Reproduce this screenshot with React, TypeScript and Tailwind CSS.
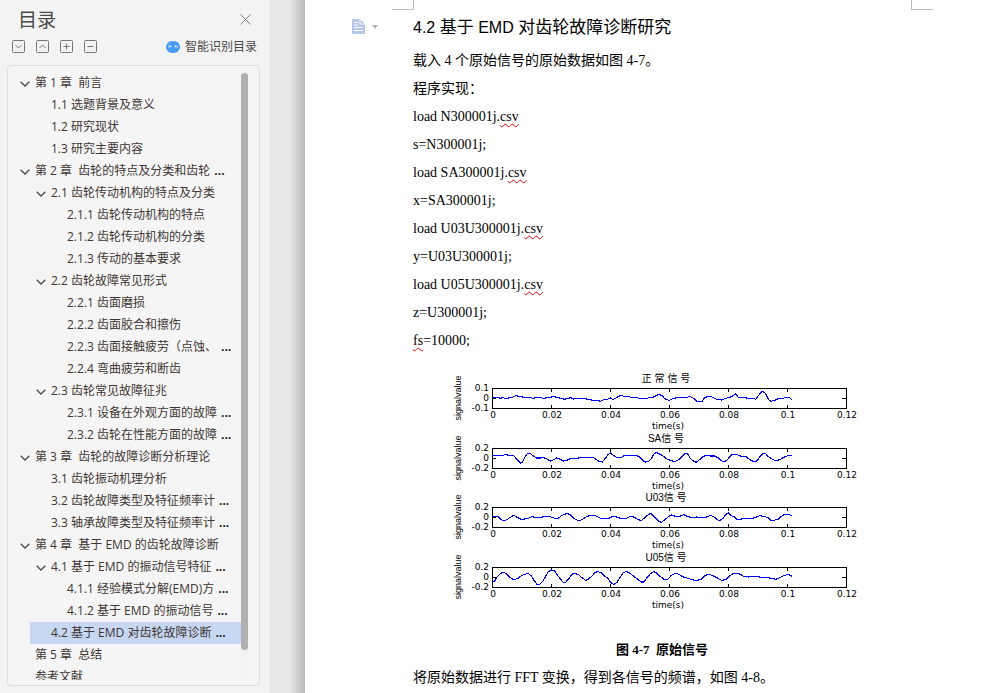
import type { ReactNode } from "react";

type TocItem = {
  text: string;
  level: 1 | 2 | 3;
  open?: boolean;
  cut?: boolean;
  current?: boolean;
};

const toc: TocItem[] = [
  { text: "第 1 章  前言", level: 1, open: true },
  { text: "1.1 选题背景及意义", level: 2 },
  { text: "1.2 研究现状", level: 2 },
  { text: "1.3 研究主要内容", level: 2 },
  { text: "第 2 章  齿轮的特点及分类和齿轮", level: 1, open: true, cut: true },
  { text: "2.1 齿轮传动机构的特点及分类", level: 2, open: true },
  { text: "2.1.1 齿轮传动机构的特点", level: 3 },
  { text: "2.1.2 齿轮传动机构的分类", level: 3 },
  { text: "2.1.3 传动的基本要求", level: 3 },
  { text: "2.2 齿轮故障常见形式", level: 2, open: true },
  { text: "2.2.1 齿面磨损", level: 3 },
  { text: "2.2.2 齿面胶合和擦伤", level: 3 },
  { text: "2.2.3 齿面接触疲劳（点蚀、", level: 3, cut: true },
  { text: "2.2.4 弯曲疲劳和断齿", level: 3 },
  { text: "2.3 齿轮常见故障征兆", level: 2, open: true },
  { text: "2.3.1 设备在外观方面的故障", level: 3, cut: true },
  { text: "2.3.2 齿轮在性能方面的故障", level: 3, cut: true },
  { text: "第 3 章  齿轮的故障诊断分析理论", level: 1, open: true },
  { text: "3.1 齿轮振动机理分析", level: 2 },
  { text: "3.2 齿轮故障类型及特征频率计", level: 2, cut: true },
  { text: "3.3 轴承故障类型及特征频率计", level: 2, cut: true },
  { text: "第 4 章  基于 EMD 的齿轮故障诊断", level: 1, open: true },
  { text: "4.1 基于 EMD 的振动信号特征", level: 2, open: true, cut: true },
  { text: "4.1.1 经验模式分解(EMD)方", level: 3, cut: true },
  { text: "4.1.2 基于 EMD 的振动信号", level: 3, cut: true },
  { text: "4.2 基于 EMD 对齿轮故障诊断", level: 2, cut: true, current: true },
  { text: "第 5 章  总结", level: 1 },
  { text: "参考文献", level: 1 },
];

const indent = { 1: "ml-[6px]", 2: "ml-[22px]", 3: "ml-[38px]" };

function TocRow({ item }: { item: TocItem }) {
  return (
    <li className={indent[item.level]}>
      <a
        href="#section"
        aria-current={item.current ? "location" : undefined}
        className={`flex h-[22px] items-center whitespace-pre ${item.current ? "bg-[#c7d7f1]" : ""}`}
      >
        <span className="flex w-[21px] shrink-0 justify-center pt-[2px]">
          {item.open && (
            <svg width="10" height="6" viewBox="0 0 10 6" fill="none" stroke="#4a4a4a" strokeWidth="1.3">
              <path d="M0.7 0.8 5 5l4.3-4.2" />
            </svg>
          )}
        </span>
        <span>{item.text}</span>
        {item.cut && <span className="ml-[4px] font-bold text-[#222]">...</span>}
      </a>
    </li>
  );
}

function BoxButton({ label, d }: { label: string; d: string }) {
  return (
    <button type="button" aria-label={label} className="h-[13px] w-[13px]">
      <svg width="13" height="13" viewBox="0 0 13 13" fill="none" stroke="#777" strokeWidth="1">
        <rect x="0.5" y="0.5" width="12" height="12" rx="1" />
        <path d={d} />
      </svg>
    </button>
  );
}

function Sidebar() {
  return (
    <aside className="flex w-[269px] shrink-0 flex-col bg-[#f3f3f3] pr-[9px] pb-[7px] pl-[7px] font-['Open_Sans','Noto_Sans_CJK_SC',sans-serif] text-[12px] text-[#403533]">
      <header className="flex h-[38px] items-center justify-between pr-[9px] pl-[11px]">
        <h2 className="pt-[2px] text-[19px] leading-9 text-[#4a4a4a]">目录</h2>
        <button type="button" aria-label="关闭">
          <svg width="11" height="11" viewBox="0 0 11 11" fill="none" stroke="#808080" strokeWidth="1">
            <path d="M0.5 0.5l10 10M10.5 0.5l-10 10" />
          </svg>
        </button>
      </header>
      <div className="flex h-[18px] items-center pr-[3px] pl-[5px]">
        <div className="flex gap-[11px] pb-[2px]">
          <BoxButton label="全部展开" d="M3.500 5l3 3 3-3" />
          <BoxButton label="全部收起" d="M3.500 8l3-3 3 3" />
          <BoxButton label="展开" d="M3.500 6.500h6M6.500 3.500v6" />
          <BoxButton label="收起" d="M3.500 6.500h6" />
        </div>
        <button type="button" className="ml-auto flex items-center gap-[5px] text-[#4a4a4a]">
          <svg width="14" height="12" viewBox="0 0 14 12">
            <path
              fill="#4b9bf5"
              d="M7 0c3.200 0 5.200 1 6 3 .8 1 1 1.700 1 3s-.2 2-1 3c-.8 2-2.800 3-6 3s-5.200-1-6-3C.2 8 0 7.300 0 6s.2-2 1-3c.8-2 2.800-3 6-3z"
            />
            <path d="M2.200 6.300 4.300 4.600 4.900 6.300M9.100 6.300l.6-1.700 2.100 1.700" fill="none" stroke="#fff" />
          </svg>
          智能识别目录
        </button>
      </div>
      <nav
        aria-label="目录"
        className="mt-[9px] flex min-h-0 flex-1 rounded-[4px] border border-[#dedede] bg-[#f5f5f5] pt-[6px] pr-[11px] pb-[5px]"
      >
        <ul className="min-w-0 flex-1 overflow-hidden">
          {toc.map((item) => (
            <TocRow key={item.text} item={item} />
          ))}
        </ul>
        <div className="w-[7px] bg-[#f2f2f2] pt-px">
          <div className="h-[95%] rounded-full bg-[#b0b0b1]" />
        </div>
      </nav>
    </aside>
  );
}

type Signal = { title: string; top: number; limit: string; points: string };

/* Trace points: x runs 157..1219 over the 0..0.12 s axis, y is measured from the zero line. */
const signals: Signal[] = [
  {
    title: "正 常 信 号",
    top: 16,
    limit: "0.1",
    points:
      "157,-1 165,-2 175,-3 182,0 190,-2 198,1 206,-1 215,-2 224,-6 230,-9 238,-5 248,-4 260,-3 272,-3 280,0 290,-2 302,-2 312,0 322,-2 332,-3 342,-6 350,-3 360,-1 375,3 385,0 393,-2 402,2 415,-1 425,1 440,2 450,4 462,6 475,7 483,9 492,4 505,2 512,-1 520,4 530,-2 540,-7 546,-9 555,-5 565,-6 575,-3 585,-3 595,-1 610,2 625,-1 640,-3 650,-8 658,-12 668,-7 675,1 688,6 700,1 712,-2 725,-2 738,-3 752,-5 762,0 770,8 778,11 787,9 795,-2 808,-7 820,-3 830,3 845,5 858,0 870,-3 880,-8 888,-13 895,-4 905,-2 920,-1 932,0 942,0 948,3 956,-8 964,-18 970,-21 978,-14 986,3 994,9 1005,6 1015,1 1030,0 1042,-4 1050,-2 1058,6",
  },
  {
    title: "SA信 号",
    top: 76,
    limit: "0.2",
    points:
      "157,-9 190,-9 198,-12 206,-9 222,-8 232,3 242,14 248,13 256,-4 264,-15 272,-15 280,-8 290,-1 302,-1 312,-2 322,2 332,8 345,3 350,-1 358,1 370,8 380,7 390,2 400,0 408,1 420,-2 460,-3 470,4 480,10 488,11 496,1 504,-10 512,-16 520,-10 528,-5 535,-1 545,-3 555,-9 590,-9 600,-4 610,7 618,11 626,10 636,0 642,-12 650,-18 658,-14 670,-7 680,1 692,6 705,10 718,3 728,-7 736,-15 744,-13 752,0 762,9 770,12 780,4 790,-5 802,-10 812,-7 825,-7 835,-2 845,7 853,11 862,5 872,-7 880,-13 892,-11 902,-7 920,-4 930,4 942,10 950,10 960,-4 968,-13 976,-16 984,-7 995,1 1008,7 1020,4 1032,-3 1042,-7 1050,-9 1058,-9",
  },
  {
    title: "U03信 号",
    top: 135,
    limit: "0.2",
    points:
      "157,-1 165,-3 175,-2 183,6 192,10 202,7 210,1 222,-6 232,0 245,6 265,4 275,-2 290,0 302,0 315,-2 332,-2 345,3 355,4 365,-5 375,-9 382,-12 392,-7 400,0 408,7 420,10 432,4 442,-3 452,-5 462,-6 472,-3 482,3 495,4 510,2 520,-3 530,-1 545,4 560,3 572,-3 582,-1 592,5 605,10 615,1 625,-7 633,-12 640,-6 648,3 655,10 665,15 675,8 685,-1 695,-7 710,-2 722,-4 732,-8 745,-2 758,1 770,-1 785,1 800,-1 813,-6 825,0 833,7 840,10 850,3 858,-9 866,-13 874,-5 884,-2 892,7 900,7 912,3 935,4 948,0 960,-5 975,-2 985,1 992,8 1002,9 1015,6 1025,-3 1035,-9 1050,-8 1058,-3",
  },
  {
    title: "U05信 号",
    top: 195,
    limit: "0.2",
    points:
      "157,13 165,11 172,-1 180,-9 190,-16 200,-11 210,0 222,7 235,3 245,-5 265,-12 275,-4 283,9 292,21 300,21 310,11 318,-3 326,-17 335,-22 345,-19 352,-9 362,5 370,14 378,15 388,3 396,-9 405,-12 418,-7 428,2 438,9 448,4 458,-5 466,-15 475,-17 485,-13 495,-4 505,3 512,14 522,22 532,15 542,-1 550,-13 560,-18 570,-13 580,-5 590,3 605,14 613,14 622,1 632,-11 642,-17 650,-14 662,-2 675,7 685,5 695,-6 708,-12 718,-9 728,-2 745,3 760,8 772,9 785,6 795,-4 805,-9 818,-6 830,0 845,9 858,7 870,-5 880,-11 898,-11 910,-4 925,-1 950,-2 970,0 990,2 1008,6 1020,1 1032,-5 1045,-9 1058,-3",
  },
];

const ticks = ["0", "0.02", "0.04", "0.06", "0.08", "0.1", "0.12"];

function SignalPlot({ signal }: { signal: Signal }) {
  return (
    <g transform={`translate(42 ${signal.top})`}>
      <text x="174" y="-6" textAnchor="middle" className="font-['Liberation_Sans','Noto_Sans_CJK_SC',sans-serif] text-[10px]">
        {signal.title}
      </text>
      <rect x="0.5" y="0.5" width="354" height="20" fill="none" stroke="#000" />
      {ticks.map((t, i) => (
        <g key={t}>
          <path d={`M${i * 59 + 0.5} 0v4m0 13v4`} stroke="#000" />
          <text x={i * 59 + 1} y="30" textAnchor="middle">{t}</text>
        </g>
      ))}
      <path d="M0 10.500h4M350 10.500h4" stroke="#000" />
      <text x="-3" y="3" textAnchor="end">{signal.limit}</text>
      <text x="-3" y="13" textAnchor="end">0</text>
      <text x="-3" y="23" textAnchor="end">-{signal.limit}</text>
      <text x="176" y="41" textAnchor="middle">time(s)</text>
      <text
        transform="translate(-31 10) rotate(-90)"
        textAnchor="middle"
        className="font-['Liberation_Sans',sans-serif] text-[9px]"
      >
        signalvalue
      </text>
      <svg x="0" y="0" width="354" height="20" viewBox="157 -31 1062 60" overflow="visible">
        <polyline
          points={signal.points}
          fill="none"
          stroke="#0000f0"
          strokeWidth="3.3"
          strokeLinejoin="round"
          shapeRendering="crispEdges"
        />
      </svg>
    </g>
  );
}

function Typo({ children }: { children: ReactNode }) {
  return (
    <span className="underline decoration-[#f00000] decoration-wavy decoration-1 underline-offset-2">{children}</span>
  );
}

function DocumentPage() {
  return (
    <main className="min-w-0 flex-1 bg-white font-['Liberation_Serif','Noto_Sans_CJK_SC',serif] text-[14px] leading-7 text-black">
      <div className="flex h-[10px] justify-between pr-[64px] pl-[87px]">
        <div className="w-[22px] border-r border-b border-[#bcbcbc]" />
        <div className="w-[22px] border-b border-l border-[#bcbcbc]" />
      </div>
      <div className="flex pr-[86px]">
        <div className="w-[108px] shrink-0 pt-[9px] pl-[47px]">
          <button type="button" aria-label="段落选项" className="flex items-center gap-[7px]">
            <svg width="13" height="15" viewBox="0 0 13 15">
              <path d="M0 0h8l5 5v10H0z" fill="#b4c7e7" />
              <path d="M8 0v5h5M2 3.500h4M2 6h4M2 8.500h8M2 11.500h9" fill="none" stroke="#fff" />
            </svg>
            <svg width="6" height="4" viewBox="0 0 6 4">
              <path d="M0 0h6L3 4z" fill="#b0b0b0" />
            </svg>
          </button>
        </div>
        <article className="min-w-0 flex-1 pt-[2px] whitespace-nowrap">
          <h1 className="mb-[3px] font-['Liberation_Sans','Noto_Sans_CJK_SC',sans-serif] text-[16px] leading-8">
            4.2 <span className="text-[17px]">基于</span> EMD <span className="text-[17px]">对齿轮故障诊断研究</span>
          </h1>
          <p>载入 4 个原始信号的原始数据如图 4-7。</p>
          <p>程序实现：</p>
          <p>load N300001j.<Typo>csv</Typo></p>
          <p>s=N300001j;</p>
          <p>load SA300001j.<Typo>csv</Typo></p>
          <p>x=SA300001j;</p>
          <p>load U03U300001j.<Typo>csv</Typo></p>
          <p>y=U03U300001j;</p>
          <p>load U05U300001j.<Typo>csv</Typo></p>
          <p>z=U300001j;</p>
          <p><Typo>fs</Typo>=10000;</p>
          <figure className="mt-[17px]">
            <svg
              width="410"
              height="240"
              viewBox="0 0 410 240"
              role="img"
              aria-label="原始信号"
              className="ml-[37px] block font-['DejaVu_Sans',sans-serif] text-[9px]"
            >
              {signals.map((s) => (
                <SignalPlot key={s.title} signal={s} />
              ))}
            </svg>
            <figcaption className="mt-[24px] text-center text-[13px] leading-7 font-bold whitespace-pre">
              图 4-7  原始信号
            </figcaption>
          </figure>
          <p>将原始数据进行 FFT 变换，得到各信号的频谱，如图 4-8。</p>
        </article>
      </div>
    </main>
  );
}

export default function App() {
  return (
    <div className="flex h-screen overflow-hidden">
      <Sidebar />
      <div className="flex w-[36px] shrink-0 bg-[#e8e8e8]">
        <div className="ml-auto w-[16px] bg-linear-to-r from-[#e8e8e8] to-[#bababa]" />
      </div>
      <DocumentPage />
    </div>
  );
}
